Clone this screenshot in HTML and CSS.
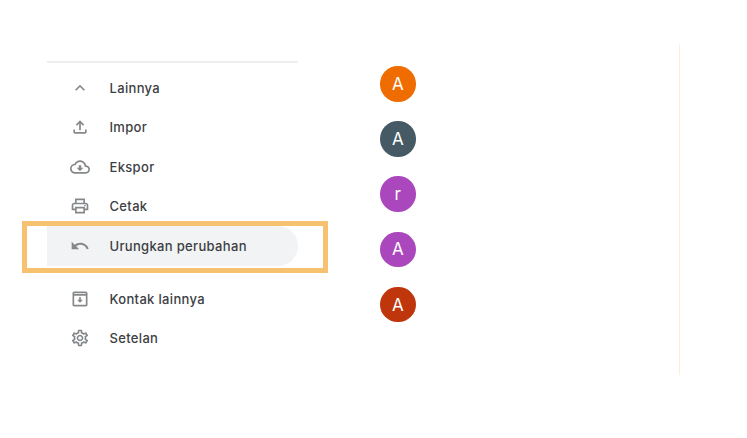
FILE: index.html
```html
<!DOCTYPE html>
<html lang="id">
<head>
<meta charset="utf-8">
<title>Kontak</title>
<link rel="stylesheet" href="styles.css">
</head>
<body>
<div class="page">
  <nav class="menu">
    <div class="group">
      <div class="row"><svg class="icon" viewBox="0 0 24 24"><path d="M12 8l-6 6 1.41 1.41L12 10.83l4.59 4.58L18 14z"/></svg><span>Lainnya</span></div>
      <div class="row"><svg class="icon" viewBox="0 0 24 24"><path d="M18 15v3H6v-3H4v3c0 1.1.9 2 2 2h12c1.1 0 2-.9 2-2v-3h-2zM7 9l1.41 1.41L11 7.83V16h2V7.83l2.59 2.58L17 9l-5-5-5 5z"/></svg><span>Impor</span></div>
      <div class="row"><svg class="icon" viewBox="0 0 24 24"><path d="M19.35 10.04C18.67 6.59 15.64 4 12 4 9.11 4 6.6 5.64 5.35 8.04 2.34 8.36 0 10.91 0 14c0 3.31 2.69 6 6 6h13c2.76 0 5-2.24 5-5 0-2.64-2.05-4.78-4.65-4.96zM19 18H6c-2.21 0-4-1.79-4-4 0-2.05 1.53-3.76 3.56-3.97l1.07-.11.5-.95C8.08 7.14 9.94 6 12 6c2.62 0 4.88 1.86 5.39 4.43l.3 1.5 1.53.11c1.56.1 2.78 1.41 2.78 2.96 0 1.65-1.35 3-3 3zm-5.55-8h-2.9v3H8l4 4 4-4h-2.55z"/></svg><span>Ekspor</span></div>
      <div class="row"><svg class="icon" viewBox="0 0 24 24"><path d="M19 8h-1V3H6v5H5c-1.66 0-3 1.34-3 3v6h4v4h12v-4h4v-6c0-1.66-1.34-3-3-3zM8 5h8v3H8V5zm8 14H8v-4h8v4zm2-4v-2H6v2H4v-4c0-.55.45-1 1-1h14c.55 0 1 .45 1 1v4h-2z"/><circle cx="18" cy="11.5" r="1"/></svg><span>Cetak</span></div>
      <div class="row active"><svg class="icon" viewBox="0 0 24 24"><path d="M12.5 8c-2.65 0-5.05.99-6.9 2.6L2 7v9h9l-3.62-3.62c1.39-1.16 3.16-1.88 5.12-1.88 3.54 0 6.55 2.31 7.6 5.5l2.37-.78C21.08 11.03 17.15 8 12.5 8z"/></svg><span>Urungkan perubahan</span></div>
    </div>
    <div class="group lower">
      <div class="row"><svg class="icon" viewBox="0 0 24 24"><path d="M19 3H5c-1.1 0-2 .9-2 2v14c0 1.1.9 2 2 2h14c1.1 0 2-.9 2-2V5c0-1.1-.9-2-2-2zm0 16H5V8h14v11zM5 6V5h14v1H5zm8 3.5h-2V13H8.5l3.5 3.5 3.5-3.5H13V9.500z"/></svg><span>Kontak lainnya</span></div>
      <div class="row"><svg class="icon" viewBox="0 0 24 24"><path d="M19.43 12.98c.04-.32.07-.64.07-.98s-.03-.66-.07-.98l2.11-1.65c.19-.15.24-.42.12-.64l-2-3.46c-.12-.22-.39-.3-.61-.22l-2.49 1c-.52-.4-1.08-.73-1.69-.98l-.38-2.65C14.460 2.180 14.250 2 14 2h-4c-.25 0-.46.18-.49.42l-.38 2.65c-.61.25-1.17.59-1.69.98l-2.49-1c-.23-.09-.49 0-.61.22l-2 3.46c-.13.22-.07.49.12.64l2.110 1.65c-.04.32-.07.65-.07.98s.03.66.07.98l-2.110 1.65c-.19.15-.24.42-.12.64l2 3.460c.12.22.39.3.61.22l2.49-1c.52.4 1.08.73 1.69.98l.38 2.65c.03.24.24.42.49.42h4c.25 0 .46-.18.49-.42l.38-2.65c.61-.25 1.17-.59 1.69-.98l2.49 1c.23.09.49 0 .61-.22l2-3.46c.12-.22.07-.49-.12-.64l-2.110-1.650zM17.450 11.270c.04.31.05.52.05.73s-.02.43-.05.73l-.14 1.130.89.7 1.080.84-.7 1.210-1.270-.51-1.040-.42-.9.68c-.43.32-.84.56-1.250.73l-1.060.43-.16 1.130-.2 1.350h-1.400l-.19-1.350-.16-1.130-1.060-.43c-.43-.18-.83-.41-1.230-.71l-.91-.7-1.060.43-1.270.51-.7-1.210 1.080-.84.89-.7-.14-1.130C6.520 12.430 6.500 12.200 6.500 12s.02-.43.05-.73l.14-1.130-.89-.7-1.080-.84.7-1.210 1.270.51 1.040.42.9-.68c.43-.32.84-.56 1.250-.73l1.060-.43.16-1.130.2-1.350h1.390l.19 1.350.16 1.130 1.060.43c.43.18.83.41 1.230.71l.91.7 1.060-.43 1.270-.51.7 1.210-1.070.85-.89.7.14 1.130zM12 8c-2.210 0-4 1.790-4 4s1.790 4 4 4 4-1.790 4-4-1.790-4-4-4zm0 6c-1.100 0-2-.9-2-2s.9-2 2-2 2 .9 2 2-.9 2-2 2z"/></svg><span>Setelan</span></div>
    </div>
  </nav>
  <section class="people">
    <div class="avatar orange">A</div>
    <div class="avatar slate">A</div>
    <div class="avatar purple">r</div>
    <div class="avatar purple">A</div>
    <div class="avatar rust">A</div>
  </section>
</div>
</body>
</html>
```

FILE: styles.css
```css
html, body {
  margin: 0;
  padding: 0;
  background: #fff;
}

body {
  width: 747px;
  height: 438px;
  overflow: hidden;
  font-family: Inter, Roboto, "Liberation Sans", sans-serif;
}

.page {
  display: flex;
  align-items: flex-start;
  width: 680px;
  height: 331px;
  margin-top: 44px;
  padding-left: 47px;
  box-sizing: border-box;
  border-right: 1px solid #fbeedd;
}

.menu {
  width: 251px;
  margin-top: 17px;
  border-top: 2px solid #eeeeee;
  flex: none;
}

.group {
  display: flex;
  flex-direction: column;
  padding-top: 5px;
}

.group.lower {
  padding-top: 13px;
}

.row {
  position: relative;
  display: flex;
  align-items: center;
  gap: 20px;
  height: 39.5px;
  padding-left: 23px;
  color: #3c4043;
  font-size: 13px;
  font-weight: 500;
  letter-spacing: 0.33px;
}

.icon {
  width: 20px;
  height: 20px;
  margin-right: -0.5px;
  fill: #85888b;
  flex: none;
}

.active {
  height: 40px;
  background: #f1f3f4;
  border-radius: 0 20px 20px 0;
}

.active::after {
  content: "";
  position: absolute;
  left: -25px;
  top: -5px;
  width: 306px;
  height: 52px;
  box-sizing: border-box;
  border: 5px solid #f6c26f;
}

.people {
  display: flex;
  flex-direction: column;
  gap: 19.700px;
  margin-left: 82px;
  padding-top: 22px;
}

.avatar {
  display: flex;
  align-items: center;
  justify-content: center;
  width: 35.500px;
  height: 35.500px;
  border-radius: 50%;
  color: #fff;
  font-size: 17px;
  font-weight: 400;
}

.orange { background: #ef6c00; }
.slate { background: #455a64; }
.purple { background: #ab47bc; }
.rust { background: #bf360c; }
```
